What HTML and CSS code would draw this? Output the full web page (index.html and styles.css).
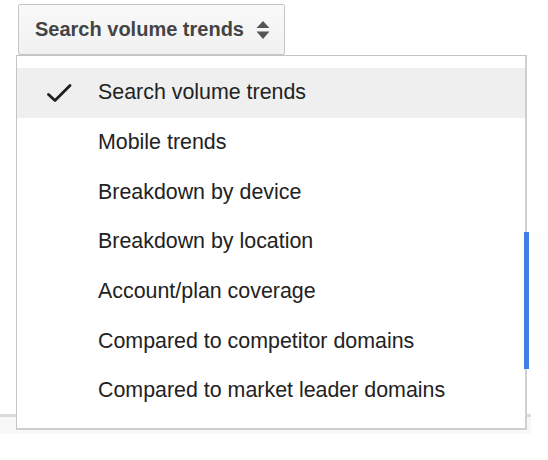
FILE: index.html
```html
<!DOCTYPE html>
<html>
<head>
<meta charset="utf-8">
<link rel="stylesheet" href="styles.css">
</head>
<body>
<div class="page-bg">
  <div class="rule"></div>
  <div class="scrollbar"></div>
</div>
<div class="wrap">
  <div class="select-btn">
    <span class="select-label">Search volume trends</span>
    <svg class="updown" width="14" height="19" viewBox="0 0 14 19">
      <path d="M7 0 L13.5 7 L0.5 7 Z" fill="#555"/>
      <path d="M0.5 10.5 L13.5 10.5 L7 18 Z" fill="#555"/>
    </svg>
  </div>
  <ul class="menu">
    <li class="item selected">
      <span class="check">
        <svg width="25" height="19" viewBox="0 0 25 19">
          <path d="M1.5 10.5 L8 16.5 L23 1.5" fill="none" stroke="#1f1f1f" stroke-width="2.8" stroke-linecap="round" stroke-linejoin="round"/>
        </svg>
      </span>
      <span class="label">Search volume trends</span>
    </li>
    <li class="item"><span class="check"></span><span class="label">Mobile trends</span></li>
    <li class="item"><span class="check"></span><span class="label">Breakdown by device</span></li>
    <li class="item"><span class="check"></span><span class="label">Breakdown by location</span></li>
    <li class="item"><span class="check"></span><span class="label">Account/plan coverage</span></li>
    <li class="item"><span class="check"></span><span class="label">Compared to competitor domains</span></li>
    <li class="item"><span class="check"></span><span class="label">Compared to market leader domains</span></li>
  </ul>
</div>
</body>
</html>
```
FILE: styles.css
```css
html, body {
  margin: 0;
  padding: 0;
  background: #ffffff;
}
body {
  font-family: "Liberation Sans", Arial, sans-serif;
  width: 548px;
  height: 460px;
  position: relative;
  overflow: hidden;
}
.page-bg {
  position: absolute;
  left: 0;
  top: 414px;
  width: 531px;
  height: 20px;
  background: #f8f8f8;
}
.rule {
  height: 3px;
  background: #dadada;
}
.scrollbar {
  position: absolute;
  left: 524px;
  top: -182px;
  width: 5px;
  height: 137px;
  background: #3f80e4;
  z-index: 3;
}
.wrap {
  position: relative;
  z-index: 2;
  padding: 4px 0 0 16px;
}
.select-btn {
  box-sizing: border-box;
  margin-left: 2px;
  width: 267px;
  height: 51px;
  border: 1px solid #c6c6c6;
  border-radius: 2px;
  background: linear-gradient(#f9f9f9, #f1f1f1);
  display: flex;
  align-items: center;
  padding-left: 16px;
  gap: 12px;
}
.select-label {
  font-weight: bold;
  font-size: 20px;
  color: #444444;
}
.updown {
  display: block;
  margin-top: 1px;
}
.menu {
  list-style: none;
  margin: 0;
  box-sizing: border-box;
  width: 511px;
  padding: 12px 0;
  background: #ffffff;
  border: 1px solid #c4c4c4;
  border-right-width: 2px;
  border-bottom-width: 2px;
  border-right-color: #cfcfcf;
  border-bottom-color: #cfcfcf;
}
.item {
  display: flex;
  align-items: center;
  height: 47.7px;
  padding: 1px 0;
  font-size: 21.4px;
  color: #222222;
}
.item.selected {
  background: #efefef;
}
.check {
  box-sizing: border-box;
  width: 81px;
  padding-left: 30px;
  flex: none;
  display: flex;
  align-items: center;
}
.check svg {
  display: block;
  margin-top: 1px;
}
.label {
  white-space: nowrap;
}
```
